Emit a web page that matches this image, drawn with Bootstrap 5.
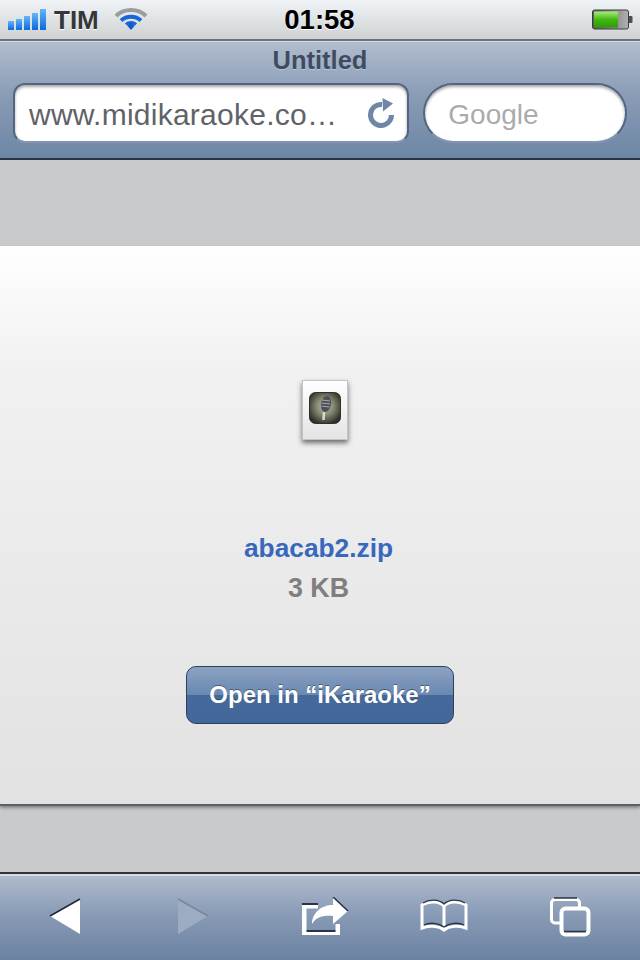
<!DOCTYPE html>
<html lang="en">
<head>
  <meta charset="UTF-8">
  <meta name="viewport" content="width=device-width, initial-scale=1.0">
  <title>Untitled</title>
  <link href="https://cdn.jsdelivr.net/npm/bootstrap@5.3.0/dist/css/bootstrap.min.css" rel="stylesheet">
  <style>
    html, body { height: 100%; }
    body {
      width: 640px;
      height: 960px;
      overflow: hidden;
      background: #c9cacc;
      font-family: "Liberation Sans", Arial, sans-serif;
    }
    body > div { flex-shrink: 0; }
    .status-strip {
      height: 41px;
      padding-left: 8px;
      padding-right: 7px;
      background: linear-gradient(#f0f4f6, #ced2d3);
      border-bottom: 2px solid #6f7276;
    }
    .status-carrier { font-size: 26px; font-weight: 700; color: #33373b; margin-left: 7px; text-shadow: 0 1px 0 #fff; line-height: 1; }
    .status-left { width: 230px; }
    .status-time { font-size: 27.5px; font-weight: 700; color: #000; line-height: 1; text-shadow: 0 1px 0 #fff; margin-right: 2px; }
    .status-right { width: 230px; }
    .wifi-icon { margin-left: 15px; }

    .addr-bar {
      height: 119px;
      padding: 0 13px;
      background: linear-gradient(#b1bdce, #8a9cb6 45%, #6d86a5);
      border-top: 1px solid #d3dae4;
      border-bottom: 2px solid #2b3446;
    }
    .addr-title {
      height: 41px;
      line-height: 37px;
      font-size: 25.5px;
      font-weight: 700;
      color: #3e4c62;
      text-align: center;
      text-shadow: 0 1px 0 #b9c4d4;
    }
    .addr-fields { gap: 14px; }
    .url-box, .search-box {
      height: 60px;
      background: #fff;
      border: 2px solid #53657f;
      border-bottom-color: #8096b3;
      box-shadow: inset 0 2px 3px rgba(0, 0, 0, .35);
    }
    .url-box {
      width: 397px;
      padding: 0 12px 0 14px;
      border-radius: 12px;
      font-size: 30px;
      color: #5f6368;
      letter-spacing: .25px;
    }
    .search-box {
      width: 204px;
      padding-left: 23px;
      border-radius: 30px;
      font-size: 28px;
      color: #ababad;
    }
    .field-text { padding-top: 3px; }

    .gray-band-top { height: 86px; }
    .gray-band-bottom { height: 66px; }
    .doc-panel {
      height: 560px;
      background: linear-gradient(#fff, #f1f1f1 22%, #e2e2e2);
      border-bottom: 2px solid #5f6062;
      box-shadow: 0 2px 3px rgba(0, 0, 0, .35);
    }
    .file-thumb {
      width: 46px;
      height: 60px;
      margin-top: 134px;
      margin-left: 10px;
      padding-top: 11px;
      background: linear-gradient(#fff, #e4e4e4);
      border: 1px solid #c4c4c4;
      box-shadow: 0 3px 5px rgba(0, 0, 0, .55);
    }
    .doc-text { margin-right: 3px; }
    .file-name { margin-top: 93px; font-size: 26.3px; line-height: 30px; font-weight: 700; color: #3768bd; }
    .file-size { margin-top: 10px; font-size: 26.8px; line-height: 30px; font-weight: 700; color: #7f7f7f; }
    .open-btn {
      width: 268px;
      height: 58px;
      margin-top: 63px;
      padding: 0;
      font-size: 24px;
      font-weight: 700;
      color: #fff;
      border: 1px solid #2c405f;
      border-radius: 10px;
      background: linear-gradient(#8ca2c2, #6a88b1 50%, #44699a 50%, #44679a);
      text-shadow: 0 -1px 0 rgba(0, 0, 0, .4);
    }

    .tool-bar {
      height: 88px;
      padding-left: 49px;
      background: linear-gradient(#b1bdce, #8a9cb6 45%, #6a82a1);
      border-top: 2px solid #2d323d;
      box-shadow: inset 0 2px 0 #d5dbe4;
    }
    .tool-bar svg { display: block; flex: none; }
    .tool-fwd { margin-left: 96px; }
    .tool-share { margin-left: 92px; }
    .tool-book { margin-left: 70px; }
    .tool-tabs { margin-left: 80px; }
  </style>
</head>
<body class="d-flex flex-column">

<!-- status bar -->
<div class="status-strip d-flex align-items-center justify-content-between">
  <div class="status-left d-flex align-items-center">
    <svg width="39" height="22" viewBox="0 0 39 22">
      <defs>
        <linearGradient id="barBlue" x1="0" y1="0" x2="0" y2="1">
          <stop offset="0" stop-color="#63b6f7"/>
          <stop offset="1" stop-color="#0a6ae0"/>
        </linearGradient>
      </defs>
      <rect x="0" y="12" width="6" height="9" fill="url(#barBlue)"/>
      <rect x="8" y="10" width="6" height="11" fill="url(#barBlue)"/>
      <rect x="16" y="7" width="6" height="14" fill="url(#barBlue)"/>
      <rect x="24" y="4" width="6" height="17" fill="url(#barBlue)"/>
      <rect x="32" y="0" width="6" height="21" fill="url(#barBlue)"/>
    </svg>
    <span class="status-carrier">TIM</span>
    <svg class="wifi-icon" width="34" height="24" viewBox="0 0 34 24">
      <path d="M2 8 A22 22 0 0 1 32 8" fill="none" stroke="#9a9c9e" stroke-width="4"/>
      <path d="M7 12.5 A15 15 0 0 1 27 12.5" fill="none" stroke="#1766d8" stroke-width="4"/>
      <path d="M12 16.5 A8 8 0 0 1 22 16.5" fill="none" stroke="#1766d8" stroke-width="3.5"/>
      <path d="M13.5 18 L17 14.5 L20.5 18 L17 22 Z" fill="#0f5ccc"/>
    </svg>
  </div>
  <div class="status-time">01:58</div>
  <div class="status-right d-flex justify-content-end align-items-center">
    <svg width="41" height="22" viewBox="0 0 41 22">
      <defs>
        <linearGradient id="battGreen" x1="0" y1="0" x2="0" y2="1">
          <stop offset="0" stop-color="#a6ec7a"/>
          <stop offset=".5" stop-color="#45b814"/>
          <stop offset="1" stop-color="#2c9a08"/>
        </linearGradient>
        <linearGradient id="battGray" x1="0" y1="0" x2="1" y2="0">
          <stop offset="0" stop-color="#5a5a5a"/>
          <stop offset="1" stop-color="#b0b0b0"/>
        </linearGradient>
      </defs>
      <rect x=".5" y="1" width="36" height="19" rx="2" fill="url(#battGray)" stroke="#3a3d3c"/>
      <rect x="2" y="2.5" width="24" height="16" fill="url(#battGreen)"/>
      <path d="M37 7 h2.5 a1 1 0 0 1 1 1 v5 a1 1 0 0 1 -1 1 h-2.5 Z" fill="#4e5153"/>
    </svg>
  </div>
</div>

<!-- title and address fields -->
<div class="addr-bar">
  <div class="addr-title">Untitled</div>
  <div class="addr-fields d-flex">
    <div class="url-box d-flex align-items-center justify-content-between">
      <span class="field-text">www.midikaraoke.co…</span>
      <svg width="28" height="30" viewBox="0 0 28 30">
        <path d="M24.5 17 A10.5 10.5 0 1 1 15 6.5" fill="none" stroke="#6f86a6" stroke-width="5"/>
        <path d="M15.5 0 L26 5.5 L16 13.5 Z" fill="#6f86a6"/>
      </svg>
    </div>
    <div class="search-box field-text d-flex align-items-center">Google</div>
  </div>
</div>

<div class="gray-band-top"></div>

<!-- download panel -->
<div class="doc-panel d-flex flex-column align-items-center">
  <div class="file-thumb d-flex justify-content-center">
    <svg width="32" height="32" viewBox="0 0 32 32">
      <defs>
        <radialGradient id="appGlow" cx=".5" cy=".45" r=".6">
          <stop offset="0" stop-color="#b4b8ae"/>
          <stop offset=".45" stop-color="#878b74"/>
          <stop offset="1" stop-color="#2c2d24"/>
        </radialGradient>
      </defs>
      <rect x=".5" y=".5" width="31" height="31" rx="6" fill="url(#appGlow)" stroke="#2f3028"/>
      <ellipse cx="17" cy="12" rx="5" ry="8" fill="#4c4f57" transform="rotate(10 17 12)"/>
      <path d="M13 8 L21 9 M12.5 11 L21 12 M12.5 14 L20.5 15" stroke="#a9acb2" stroke-width="1"/>
      <path d="M15 20 L14.5 28" stroke="#d8d8d4" stroke-width="2.5"/>
    </svg>
  </div>
  <div class="doc-text file-name">abacab2.zip</div>
  <div class="doc-text file-size">3 KB</div>
  <button type="button" class="btn open-btn">Open in “iKaraoke”</button>
</div>

<div class="gray-band-bottom"></div>

<!-- bottom toolbar -->
<div class="tool-bar d-flex align-items-center">
  <svg width="32" height="38" viewBox="0 0 32 38">
    <path d="M1 18 L31 1 V36 Z" fill="#fff"/>
    <path d="M1 18 L31 1" stroke="#20283a" stroke-width="1.5" fill="none"/>
  </svg>
  <svg class="tool-fwd" width="32" height="38" viewBox="0 0 32 38">
    <path d="M1 1 L31 18 L1 36 Z" fill="#9dacc3"/>
    <path d="M1 1 L31 18" stroke="#77879f" stroke-width="1.5" fill="none"/>
  </svg>
  <svg class="tool-share" width="48" height="40" viewBox="0 0 48 40">
    <path d="M1 8 H17 V11.5 H5.5 V33.5 H34.5 V27 H39 V38 H1 Z" fill="#fff"/>
    <path d="M1 7 H17 M5.5 34 H34.5" stroke="#2b3446" stroke-width="2" fill="none"/>
    <path d="M11 27 C11 16 20 8 32 8 V0 L47 14 L32 27 V19 C22 18 15 20 11 27 Z" fill="#fff"/>
    <path d="M32 0 L47 14" stroke="#2b3446" stroke-width="1.6" fill="none"/>
  </svg>
  <svg class="tool-book" width="50" height="36" viewBox="0 0 50 36">
    <path d="M25 31 C20 27 10 26 3 29 V6 C10 2 20 2 25 7 C30 2 40 2 47 6 V29 C40 26 30 27 25 31 Z" fill="none" stroke="#fff" stroke-width="3"/>
    <path d="M25 7 V31" stroke="#fff" stroke-width="3"/>
    <path d="M4 4 C10 0 20 0 25 5 C30 0 40 0 46 4 M5 26 C11 23 20 24 25 28 C30 24 39 23 45 26" fill="none" stroke="#2b3446" stroke-width="1.3"/>
  </svg>
  <svg class="tool-tabs" width="42" height="40" viewBox="0 0 42 40">
    <path d="M12 26 H6 A3.5 3.5 0 0 1 2.5 22.5 V6 A3.5 3.5 0 0 1 6 2.5 H27 A3.5 3.5 0 0 1 30.5 6 V11" fill="none" stroke="#fff" stroke-width="3"/>
    <rect x="12.5" y="11.5" width="27" height="26" rx="4" fill="none" stroke="#fff" stroke-width="4"/>
    <path d="M5 1 H28 M15 34.5 H37" stroke="#2b3446" stroke-width="1.5" fill="none"/>
  </svg>
</div>

<script src="https://cdn.jsdelivr.net/npm/bootstrap@5.3.0/dist/js/bootstrap.bundle.min.js"></script>
</body>
</html>
